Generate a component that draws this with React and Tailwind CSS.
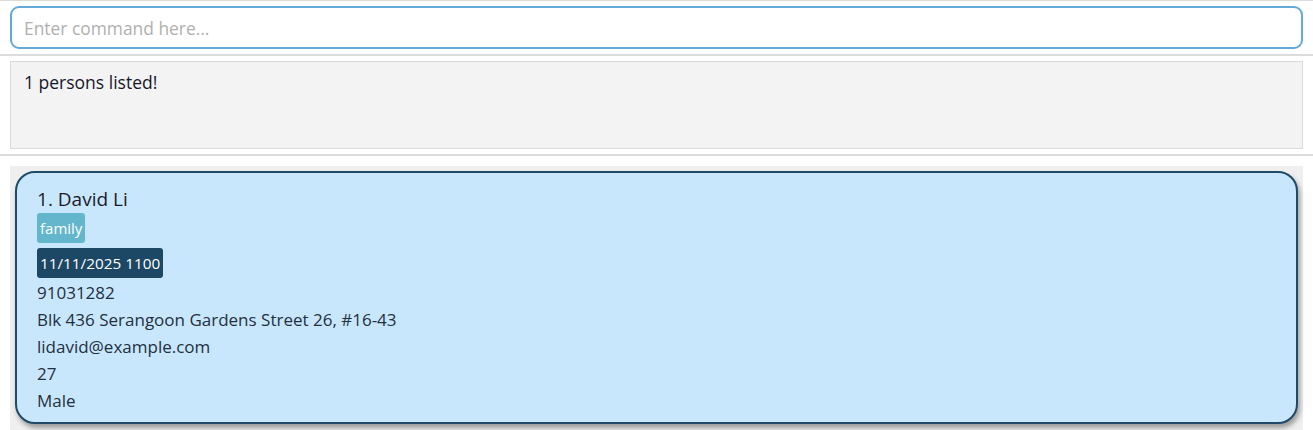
import React from "react";

const font = { fontFamily: '"Segoe UI", "Open Sans", "Noto Sans", sans-serif' };

const person = {
  index: 1,
  name: "David Li",
  tags: ["family"],
  appointment: "11/11/2025 1100",
  details: [
    "91031282",
    "Blk 436 Serangoon Gardens Street 26, #16-43",
    "lidavid@example.com",
    "27",
    "Male",
  ],
};

const PersonCard = ({ person }) => (
  <div className="rounded-[20px] border-2 border-[#1f4a68] bg-[#c9e7fc] pl-[20px] pt-[13px] pb-[8px] shadow-[2px_4px_5px_rgba(0,0,0,0.35)]">
    <div className="text-[19px] leading-[26px] text-[#1b1b2a]">
      {person.index}. {person.name}
    </div>
    <div className="mt-[1px] flex gap-1">
      {person.tags.map((tag) => (
        <span
          key={tag}
          className="rounded-[3px] bg-[#63b6cc] px-[3px] text-[15px] leading-[30px] text-white"
        >
          {tag}
        </span>
      ))}
    </div>
    <div className="mt-[5px] flex">
      <span className="rounded-[3px] bg-[#1d4865] px-[3px] text-[15.3px] leading-[30px] text-white">
        {person.appointment}
      </span>
    </div>
    <div className="mt-[1px]">
      {person.details.map((line, i) => (
        <div key={i} className="text-[17px] leading-[27px] text-[#22303f]">
          {line}
        </div>
      ))}
    </div>
  </div>
);

export default function App() {
  return (
    <div className="h-[430px] w-full overflow-hidden bg-white" style={font}>
      <div className="h-px bg-[#dcdcdc]" />
      <div className="px-[10px] pt-[5px]">
        <input
          className="h-[43px] w-[1293px] rounded-[9px] border-2 border-[#64aad8] bg-white px-[12px] text-[17.4px] text-[#1b1b2a] outline-none placeholder:text-[#b0b0b0]"
          placeholder="Enter command here..."
        />
      </div>
      <div className="mt-[5px] h-[2px] bg-[#dcdcdc]" />
      <div className="px-[10px] pt-[5px]">
        <div className="h-[88px] w-[1293px] border border-[#dadada] bg-[#f3f3f3] px-[13px] py-[8px] text-[17.5px] leading-[24px] text-[#17172b]">
          1 persons listed!
        </div>
      </div>
      <div className="mt-[5px] h-[2px] bg-[#dcdcdc]" />
      <div className="px-[10px] pt-[10px]">
        <div className="w-[1293px] bg-[#efefef] px-[5px] pt-[5px] pb-[8px]">
          <PersonCard person={person} />
        </div>
      </div>
    </div>
  );
}
